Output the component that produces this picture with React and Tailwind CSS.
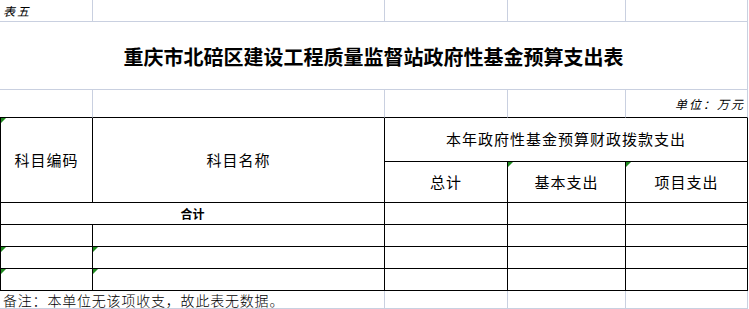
import React from "react";

const G = "border-[#c9d0e0]";
const font = { fontFamily: '"Noto Sans CJK SC", "Noto Sans", sans-serif' };

function Tri() {
  return (
    <svg className="absolute left-0 top-0" width="5" height="5" viewBox="0 0 5 5">
      <polygon points="0,0 5,0 0,5" fill="#1f8a1f" />
    </svg>
  );
}

export default function App() {
  const gcell = `border-r border-b ${G}`;
  const tcell = "relative border-r border-b border-black flex items-center justify-center";
  const hd = "text-[15px] tracking-[1px]";
  return (
    <div
      className="w-[749px] h-[309px] bg-white text-black overflow-hidden"
      style={font}
    >
      <div className="grid grid-cols-[93px_292px_123px_118px_122px] grid-rows-[22px_68px_28px_44px_41px_22px_22px_22px_22px_18px]">
        {/* row 0 */}
        <div className={`${gcell} flex items-center pl-[3px] text-[12px] italic leading-none tracking-[2px]`}>表五</div>
        <div className={gcell}></div>
        <div className={gcell}></div>
        <div className={gcell}></div>
        <div className={gcell}></div>

        {/* title */}
        <div className={`col-span-5 ${gcell} flex items-center justify-center pt-[2px] text-[20px] font-bold leading-none`}>
          重庆市北碚区建设工程质量监督站政府性基金预算支出表
        </div>

        {/* unit row */}
        <div className={`border-r ${G} border-b border-b-black`}></div>
        <div className={`border-r ${G} border-b border-b-black`}></div>
        <div className={`border-r ${G} border-b border-b-black`}></div>
        <div className={`border-r ${G} border-b border-b-black`}></div>
        <div className={`border-r ${G} border-b border-b-black flex items-center justify-end pr-[2px] text-[12px] italic leading-none tracking-[2px]`}>
          单位：万元
        </div>

        {/* header */}
        <div className={`${tcell} row-span-2 border-l ${hd}`}>
          <Tri />
          科目编码
        </div>
        <div className={`${tcell} row-span-2 ${hd}`}>科目名称</div>
        <div className={`${tcell} col-span-3 ${hd}`}>本年政府性基金预算财政拨款支出</div>
        <div className={`${tcell} ${hd}`}>总计</div>
        <div className={`${tcell} ${hd}`}>
          <Tri />
          基本支出
        </div>
        <div className={`${tcell} ${hd}`}>
          <Tri />
          项目支出
        </div>

        {/* 合计 */}
        <div className={`${tcell} col-span-2 border-l text-[12px] font-bold`}>合计</div>
        <div className={tcell}></div>
        <div className={tcell}></div>
        <div className={tcell}></div>

        {/* empty row */}
        <div className={`${tcell} border-l`}></div>
        <div className={tcell}></div>
        <div className={tcell}></div>
        <div className={tcell}></div>
        <div className={tcell}></div>

        {/* rows with markers */}
        <div className={`${tcell} border-l`}><Tri /></div>
        <div className={tcell}><Tri /></div>
        <div className={tcell}></div>
        <div className={tcell}></div>
        <div className={tcell}></div>

        <div className={`${tcell} border-l`}><Tri /></div>
        <div className={tcell}><Tri /></div>
        <div className={tcell}></div>
        <div className={tcell}></div>
        <div className={tcell}></div>

        {/* note */}
        <div className={`col-span-2 ${gcell} flex items-center pl-[3px] text-[14px] font-light leading-none tracking-[0.8px] whitespace-nowrap overflow-visible`}>
          备注：本单位无该项收支，故此表无数据。
        </div>
        <div className={gcell}></div>
        <div className={gcell}></div>
        <div className={gcell}></div>
      </div>
    </div>
  );
}
